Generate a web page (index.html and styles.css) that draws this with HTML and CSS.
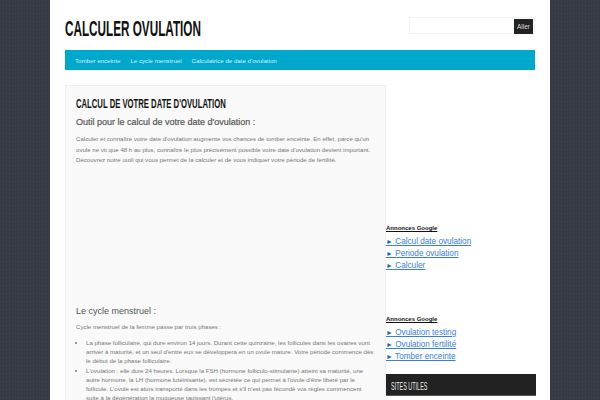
FILE: index.html
```html
<!DOCTYPE html>
<html lang="fr">
<head>
<meta charset="utf-8">
<title>Calculer ovulation</title>
<link rel="stylesheet" href="styles.css">
</head>
<body>
<div class="wrap">
  <header class="head">
    <div class="site-title">Calculer ovulation</div>
    <form class="search">
      <input class="search-input" type="text">
      <span class="search-btn">Aller</span>
    </form>
  </header>
  <nav class="nav">
    <a>Tomber enceinte</a>
    <a>Le cycle menstruel</a>
    <a>Calculatrice de date d'ovulation</a>
  </nav>
  <div class="cols">
    <main class="post">
      <h1 class="post-title">Calcul de votre date d'ovulation</h1>
      <h2 class="h-first">Outil pour le calcul de votre date d'ovulation :</h2>
      <p class="intro">Calculer et connaître votre date d'ovulation augmente vos chances de tomber enceinte. En effet, parce qu'un ovule ne vit que 48 h au plus, connaître le plus précisément possible votre date d'ovulation devient important. Découvrez notre outil qui vous permet de la calculer et de vous indiquer votre période de fertilité.</p>
      <h2 class="h-second">Le cycle menstruel :</h2>
      <p class="lead">Cycle menstruel de la femme passe par trois phases :</p>
      <ul class="phases">
        <li>La phase folliculaire, qui dure environ 14 jours. Durant cette quinzaine, les follicules dans les ovaires vont arriver à maturité, et un seul d'entre eux se développera en un ovule mature. Votre période commence dès le début de la phase folliculaire.</li>
        <li>L'ovulation : elle dure 24 heures. Lorsque la FSH (hormone folliculo-stimulante) atteint sa maturité, une autre hormone, la LH (hormone lutéinisante), est sécrétée ce qui permet à l'ovule d'être libéré par le follicule. L'ovule est alors transporté dans les trompes et s'il n'est pas fécondé vos règles commencent suite à la dégénération la muqueuse tapissant l'utérus.</li>
      </ul>
    </main>
    <aside class="side">
      <div class="ads ads-one">
        <div class="ads-label">Annonces Google</div>
        <a><span class="arrow">►</span> Calcul date ovulation</a>
        <a><span class="arrow">►</span> Periode ovulation</a>
        <a><span class="arrow">►</span> Calculer</a>
      </div>
      <div class="ads ads-two">
        <div class="ads-label">Annonces Google</div>
        <a><span class="arrow">►</span> Ovulation testing</a>
        <a><span class="arrow">►</span> Ovulation fertilité</a>
        <a><span class="arrow">►</span> Tomber enceinte</a>
      </div>
      <div class="widget-title"><span class="widget-text">Sites utiles</span></div>
    </aside>
  </div>
</div>
</body>
</html>
```
FILE: styles.css
```css
html, body {
  margin: 0;
  height: 400px;
  overflow: hidden;
}
body {
  background-color: #363b46;
  background-image:
    repeating-linear-gradient(90deg, rgba(255,255,255,.02) 0 1px, transparent 1px 3px),
    repeating-linear-gradient(0deg, rgba(0,0,0,.04) 0 1px, transparent 1px 4px);
  font-family: "Liberation Sans", Arial, sans-serif;
  color: #666;
}
.wrap {
  width: 470px;
  height: 400px;
  margin: 0 auto;
  padding: 0 15px;
  background: #fff;
  overflow: hidden;
}
.head {
  display: flex;
  justify-content: space-between;
  height: 50px;
}
.site-title,
.post-title,
.widget-text {
  font-family: "Liberation Sans", sans-serif;
  font-weight: 700;
  text-transform: uppercase;
  transform-origin: left center;
  white-space: nowrap;
}
.site-title {
  font-size: 22px;
  line-height: 24px;
  margin-top: 17px;
  color: #111;
  transform: scaleX(.533);
  width: 136px;
}
.search {
  display: flex;
  width: 126px;
  height: 17px;
  margin-top: 17px;
  box-sizing: border-box;
  border: 1px solid #f0f0f0;
  padding-right: 1px;
}
.search-input {
  flex: 1;
  min-width: 0;
  border: 0;
  padding: 0;
  background: transparent;
}
.search-btn {
  width: 19px;
  height: 15px;
  margin-top: 1px;
  background: #222;
  color: #ddd;
  font-size: 6.5px;
  line-height: 15px;
  text-align: center;
}
.nav {
  display: flex;
  gap: 10px;
  height: 20px;
  padding-left: 10px;
  background: #00a8cc;
  color: #d5f0f6;
  font-size: 6.15px;
  line-height: 21px;
}
.cols {
  display: flex;
  margin-top: 15px;
}
.post {
  width: 321px;
  height: 400px;
  flex: none;
  box-sizing: border-box;
  padding: 0 10px;
  background: #f9f9f9;
  border: 1px solid #eee;
  font-size: 6.1px;
  line-height: 10.5px;
  color: #777;
}
.post-title {
  margin: 10px 0 0;
  font-size: 13.5px;
  line-height: 15px;
  color: #111;
  transform: scaleX(.57);
}
h2 {
  margin: 0;
  font-weight: 400;
  color: #555;
  line-height: 14px;
}
.h-first {
  font-size: 9px;
  margin-top: 4px;
  -webkit-text-stroke: .2px #555;
}
.h-second {
  font-size: 9px;
  margin-top: 138px;
}
p {
  margin: 0;
}
.intro {
  margin-top: 5px;
}
.lead {
  margin-top: 4px;
}
.phases {
  margin: 6px 0 0;
  padding-left: 10px;
  line-height: 9.2px;
}
.side {
  flex: 1;
  min-width: 0;
  width: 150px;
}
.ads a {
  display: block;
  font-size: 8.2px;
  line-height: 12px;
  color: #3b7dcf;
  text-decoration: underline;
}
.arrow {
  font-size: 7px;
  color: #1a66b8;
}
.ads-label {
  font-size: 6px;
  font-weight: 700;
  line-height: 8px;
  color: #111;
  text-decoration: underline;
  margin-bottom: 4px;
}
.ads-one {
  margin-top: 139px;
}
.ads-two {
  margin-top: 43px;
}
.widget-title {
  width: 150px;
  height: 22px;
  margin-top: 11px;
  padding-left: 5px;
  box-sizing: border-box;
  background: #222;
  border-bottom: 1px solid #555;
  color: #eee;
  line-height: 21px;
}
.widget-text {
  display: inline-block;
  font-size: 10.5px;
  font-weight: 400;
  transform: scaleX(.52);
}
```
